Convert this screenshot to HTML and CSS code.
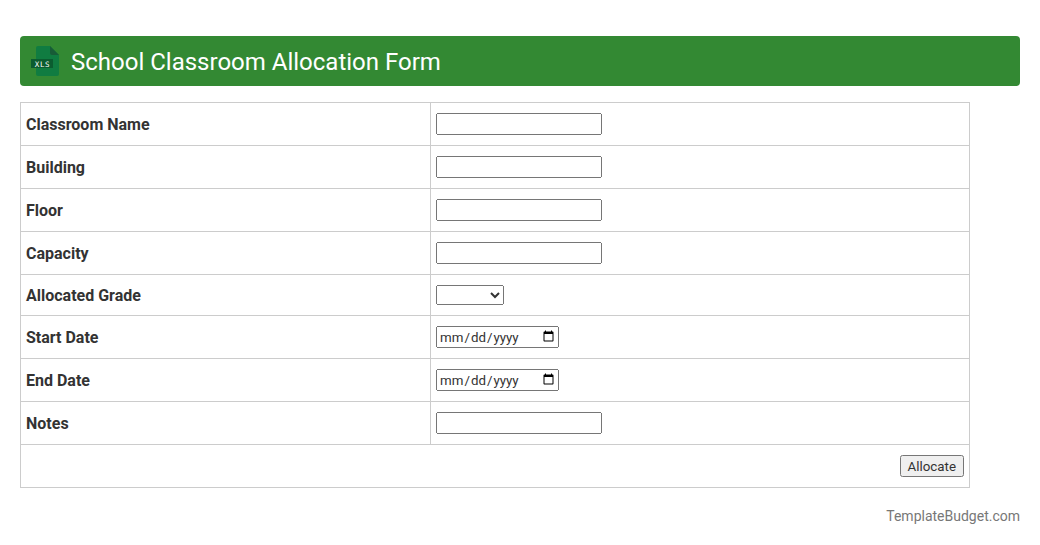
FILE: index.html
```html
<!DOCTYPE html>
<html>

<head>
    <meta charset="UTF-8">
    <meta name="viewport" content="width=device-width, initial-scale=1.0">
    <link rel="stylesheet" href="styles.css">
    <title>School Classroom Allocation Form</title>
</head>

<body>

    <div class="header">
        <svg class="logo" width="31" height="30" viewBox="0 0 31 30">
            <path d="M7 0H19L28 9V28Q28 30 26 30H7Q5 30 5 28V2Q5 0 7 0Z" fill="#107c41"/>
            <path d="M19 0L28 9H21Q19 9 19 7Z" fill="#185c37"/>
            <rect x="0" y="13" width="22" height="9" fill="#0b5c30"/>
            <text x="11.5" y="20.5" class="logo-text" text-anchor="middle">XLS</text>
        </svg>
        <h1>School Classroom Allocation Form</h1>
    </div>

    <form>
        <table class="form-table">
            <tr>
                <th>Classroom Name</th>
                <td><input type="text"></td>
            </tr>
            <tr>
                <th>Building</th>
                <td><input type="text"></td>
            </tr>
            <tr>
                <th>Floor</th>
                <td><input type="text"></td>
            </tr>
            <tr>
                <th>Capacity</th>
                <td><input type="text"></td>
            </tr>
            <tr>
                <th>Allocated Grade</th>
                <td>
                    <select class="grade">
                        <option></option>
                    </select>
                </td>
            </tr>
            <tr>
                <th>Start Date</th>
                <td><input type="date"></td>
            </tr>
            <tr>
                <th>End Date</th>
                <td><input type="date"></td>
            </tr>
            <tr>
                <th>Notes</th>
                <td><input type="text"></td>
            </tr>
            <tr>
                <td colspan="2" class="actions"><button type="button">Allocate</button></td>
            </tr>
        </table>
    </form>

    <div class="footer">TemplateBudget.com</div>

</body>

</html>
```

FILE: styles.css
```css
body {
    margin: 0;
    padding: 36px 20px 0;
    font-family: Roboto, "Liberation Sans", sans-serif;
    font-size: 16px;
    color: #333;
    background-color: #fff;
}

.header {
    background-color: #338933;
    color: white;
    height: 50px;
    border-radius: 4px;
    padding-left: 11px;
    display: flex;
    align-items: center;
    box-sizing: border-box;
}

.logo {
    margin-right: 9px;
}

.logo-text {
    font-family: "DejaVu Sans Mono", monospace;
    font-size: 7.5px;
    letter-spacing: 0.7px;
    fill: white;
}

.header h1 {
    margin: 0;
    padding-top: 2px;
    font-size: 24px;
    font-weight: 400;
}

.form-table {
    width: 950px;
    margin-top: 16px;
    border-collapse: collapse;
    table-layout: fixed;
}

.form-table th,
.form-table td {
    border: 1px solid #ccc;
    padding: 10px 5px;
}

.form-table th {
    width: 399px;
    text-align: left;
    font-weight: 700;
}

input,
select,
button {
    display: block;
    box-sizing: border-box;
    font-family: Roboto, "Liberation Sans", sans-serif;
    font-size: 13.333px;
    color: #333;
}

input {
    height: 22px;
}

input[type="text"] {
    width: 166px;
}

input[type="date"] {
    width: 123px;
}

input[type="date"]::-webkit-datetime-edit {
    padding: 1px 0 0 1px;
}

input[type="date"]::-webkit-datetime-edit-month-field,
input[type="date"]::-webkit-datetime-edit-day-field,
input[type="date"]::-webkit-datetime-edit-year-field {
    padding: 0;
}

input[type="date"]::-webkit-datetime-edit-text {
    padding: 0 1px;
}

.grade {
    width: 68px;
    height: 20px;
}

.actions button {
    height: 22px;
    margin-left: auto;
}

.footer {
    margin-top: 20px;
    text-align: right;
    font-size: 14px;
    color: #777;
}
```
